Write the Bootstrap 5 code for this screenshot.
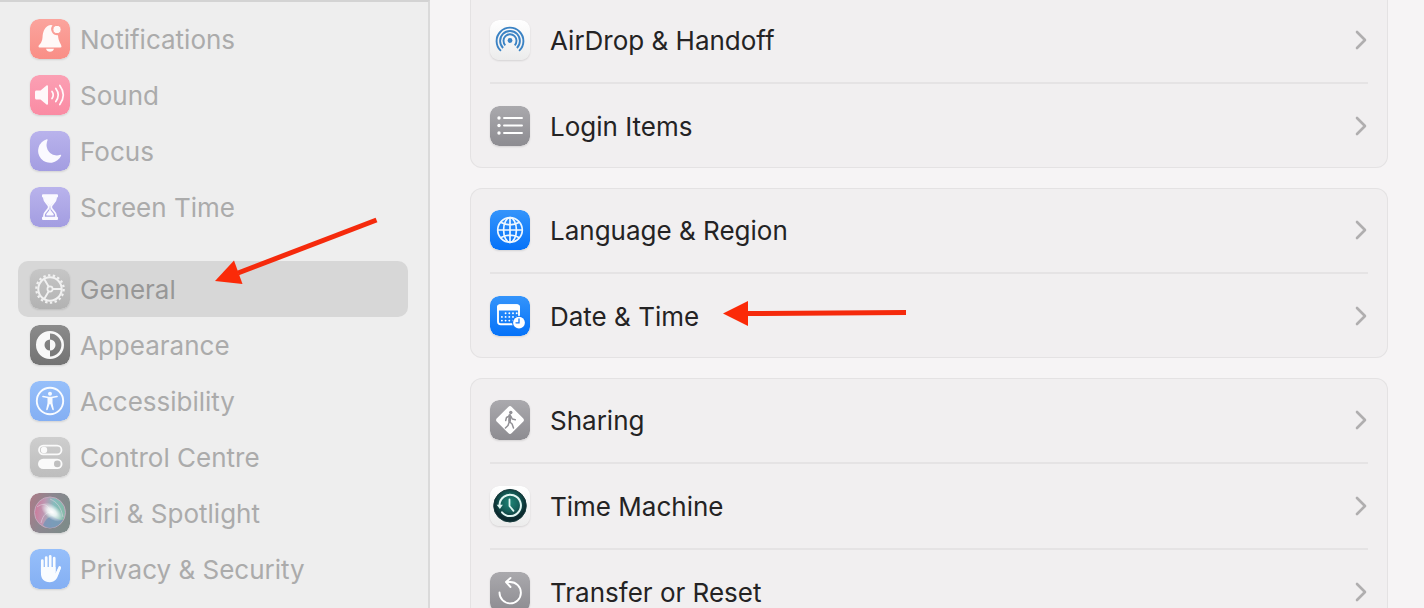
<!DOCTYPE html>
<html lang="en-GB">
<head>
<meta charset="utf-8">
<meta name="viewport" content="width=device-width, initial-scale=1">
<title>System Settings – General</title>
<link href="https://cdn.jsdelivr.net/npm/bootstrap@5.3.0/dist/css/bootstrap.min.css" rel="stylesheet">
<style>
  body { font-family: Inter, "Liberation Sans", sans-serif; font-size: 26px; line-height: 32px; background: #f6f4f5; color: #242324; }
  .side-pane { width: 430px; background: #eeeeee; border-top: 2px solid #d3d3d3; border-right: 2px solid #dadada; padding: 9px 20px 12px 18px; }
  .side-link { height: 56px; padding: 0 12px; gap: 10px; border-radius: 10px; color: #ababab; }
  .side-link:hover { color: #979797; }
  .side-link.active { background: #d7d7d7; color: #979797; }
  .side-link > span, .panel-row > span { padding-top: 2px; }
  .side-group { margin-top: 26px; }
  .tile { width: 40px; height: 40px; flex: none; border-radius: 9px; box-shadow: 0 1px 2px rgba(0,0,0,.12); }
  .main-pane { padding: 0 36px 20px 40px; }
  .panel { background: #f1eff0; border-radius: 12px; box-shadow: inset 0 0 0 1px #e4e2e3; padding: 0 20px; margin-bottom: 20px; }
  .panel-cut { margin-top: -2px; border-top-left-radius: 0; border-top-right-radius: 0; }
  .panel-row { height: 84px; gap: 20px; color: inherit; }
  .panel-row + .panel-row { height: 86px; border-top: 2px solid #e5e3e4; }
  .chev { width: 14px; height: 20px; flex: none; }
  .pointer { position: absolute; pointer-events: none; z-index: 2; }
  .pointer-general { left: 196px; top: -44px; }
  .pointer-date { left: 232px; top: 27px; }
</style>
<script src="https://cdn.jsdelivr.net/npm/bootstrap@5.3.0/dist/js/bootstrap.bundle.min.js"></script>
</head>
<body>
<div class="d-flex vh-100 overflow-hidden">
  <nav class="side-pane flex-shrink-0 overflow-hidden" aria-label="Settings">
    <div class="d-flex flex-column">
      <a href="#" class="side-link d-flex align-items-center text-decoration-none">
        <svg class="tile" viewBox="0 0 40 40" aria-hidden="true"><defs><linearGradient id="gRed" x2="0" y2="1"><stop stop-color="#fba49d"/><stop offset="1" stop-color="#f98e86"/></linearGradient></defs><rect width="40" height="40" rx="9" fill="url(#gRed)"/><path d="M8.500 27.500c0-2 3.500-2.500 4-9 .4-6.500 2.500-11.500 8-12.500l2 .3a6.200 6.200 0 0 0 5.500 10c.5 7 3.500 9 3.500 11.200 0 .6-.4.900-1 .9H9.500c-.6 0-1-.3-1-.9zM16 29.800h8c-.5 2-2 3-4 3s-3.500-1-4-3z" fill="#fff8f7"/><circle cx="27" cy="10.500" r="4.100" fill="#fff8f7" stroke="#fa9c94" stroke-width="1"/></svg>
        <span>Notifications</span></a>
      <a href="#" class="side-link d-flex align-items-center text-decoration-none">
        <svg class="tile" viewBox="0 0 40 40" aria-hidden="true"><defs><linearGradient id="gPink" x2="0" y2="1"><stop stop-color="#fba0b4"/><stop offset="1" stop-color="#fa8ba3"/></linearGradient></defs><rect width="40" height="40" rx="9" fill="url(#gPink)"/><path d="M5 17c0-.9.5-1.500 1.500-1.500h4l6-5c.8-.6 1.500-.2 1.500.8v17.400c0 1-.7 1.400-1.500.8l-6-5h-4c-1 0-1.500-.6-1.500-1.500z" fill="#fff8fa"/><g fill="none" stroke="#fff8fa" stroke-width="1.700" stroke-linecap="round"><path d="M22 16.500q2.500 3.500 0 7" /><path d="M25.800 13.500q4.800 6.500 0 13"/><path d="M29.800 10.500q7 9.500 0 19"/></g></svg>
        <span>Sound</span></a>
      <a href="#" class="side-link d-flex align-items-center text-decoration-none">
        <svg class="tile" viewBox="0 0 40 40" aria-hidden="true"><defs><linearGradient id="gPurple" x2="0" y2="1"><stop stop-color="#b9b3ec"/><stop offset="1" stop-color="#a39de1"/></linearGradient></defs><rect width="40" height="40" rx="9" fill="url(#gPurple)"/><path d="M16.800 8.300c.5-.2 1 .2.800.8A14 14 0 0 0 16.500 14a10.300 10.300 0 0 0 13.700 9.800c.7-.2 1.200.2.900.9A12 12 0 1 1 16.800 8.300z" fill="#faf9ff"/></svg>
        <span>Focus</span></a>
      <a href="#" class="side-link d-flex align-items-center text-decoration-none">
        <svg class="tile" viewBox="0 0 40 40" aria-hidden="true"><rect width="40" height="40" rx="9" fill="url(#gPurple)"/><g fill="none" stroke="#faf9ff" stroke-width="1.700"><path d="M14 9v2.500c0 4 4.800 5.500 4.800 8.500S14 24.500 14 28.500V31M26 9v2.500c0 4-4.800 5.500-4.800 8.500s4.800 4.500 4.800 8.500V31"/></g><path d="M13 7.200h14a1 1 0 0 1 1 1v1.300a1 1 0 0 1-1 1H13a1 1 0 0 1-1-1V8.200a1 1 0 0 1 1-1zM13 29.700h14a1 1 0 0 1 1 1V32a1 1 0 0 1-1 1H13a1 1 0 0 1-1-1v-1.300a1 1 0 0 1 1-1zM14.500 10h11v2.500c-1 3.500-4.900 4-5.200 8h-.6c-.3-4-4.200-4.500-5.200-8zM19.700 20h.6c0 2.500.3 3.500 1.300 4.500l2 2.500c.5 1 0 1.500-.8 1.500h-5.600c-.8 0-1.300-.5-.8-1.500l2-2.500c1-1 1.300-2 1.300-4.500z" fill="#faf9ff"/></svg>
        <span>Screen Time</span></a>
    </div>
    <div class="side-group d-flex flex-column">
      <a href="#" class="side-link active d-flex align-items-center text-decoration-none position-relative" aria-current="page">
        <svg class="tile" viewBox="0 0 40 40" aria-hidden="true"><defs><linearGradient id="gGrey" x2="0" y2="1"><stop stop-color="#c6c6c6"/><stop offset="1" stop-color="#b2b2b2"/></linearGradient></defs><rect width="40" height="40" rx="9" fill="url(#gGrey)"/><g fill="none" stroke="#f1f1f1"><circle cx="20" cy="20" r="13.700" stroke-width="2.200" stroke-dasharray="2.390 2.390"/><circle cx="20" cy="20" r="11.700" stroke-width="2"/><circle cx="20" cy="20" r="2.600" stroke-width="1.700"/><path d="M22.800 20H31M18.600 17.600 14.200 10M18.600 22.400 14.200 30" stroke-width="1.900"/></g></svg>
        <span>General</span>
        <svg class="pointer pointer-general" width="166" height="70" viewBox="0 0 166 70" aria-hidden="true"><path d="M24 56 162.500 3" stroke="#f52a0c" stroke-width="5"/><path d="M1 64 20 43.500 28.500 67z" fill="#fb2a08"/></svg>
      </a>
      <a href="#" class="side-link d-flex align-items-center text-decoration-none">
        <svg class="tile" viewBox="0 0 40 40" aria-hidden="true"><defs><linearGradient id="gDark" x2="0" y2="1"><stop stop-color="#8b8b8b"/><stop offset="1" stop-color="#737373"/></linearGradient></defs><rect width="40" height="40" rx="9" fill="url(#gDark)"/><circle cx="20" cy="20" r="12.700" fill="none" stroke="#f8f8f8" stroke-width="2.600"/><path d="M20 7a13 13 0 0 0 0 26v-7.500a5.500 5.500 0 0 1 0-11zM20 14.500a5.500 5.500 0 0 1 0 11z" fill="#f8f8f8"/></svg>
        <span>Appearance</span></a>
      <a href="#" class="side-link d-flex align-items-center text-decoration-none">
        <svg class="tile" viewBox="0 0 40 40" aria-hidden="true"><defs><linearGradient id="gSky" x2="0" y2="1"><stop stop-color="#96bffa"/><stop offset="1" stop-color="#84aff3"/></linearGradient></defs><rect width="40" height="40" rx="9" fill="url(#gSky)"/><circle cx="20" cy="20" r="13.200" fill="none" stroke="#f8fbff" stroke-width="1.900"/><circle cx="20" cy="12.800" r="2" fill="#f8fbff"/><path d="M13 15.500 18.500 16.500h3l5.500-1" stroke="#f8fbff" stroke-width="1.700" fill="none" stroke-linecap="round"/><path d="M17.500 16h5v6l1.300 6.200c.2 1-1.200 1.400-1.500.4L20.300 23h-.6l-2 5.600c-.3 1-1.700.6-1.500-.4L17.500 22z" fill="#f8fbff"/></svg>
        <span>Accessibility</span></a>
      <a href="#" class="side-link d-flex align-items-center text-decoration-none">
        <svg class="tile" viewBox="0 0 40 40" aria-hidden="true"><defs><linearGradient id="gSilver" x2="0" y2="1"><stop stop-color="#cecece"/><stop offset="1" stop-color="#bdbdbd"/></linearGradient></defs><rect width="40" height="40" rx="9" fill="url(#gSilver)"/><rect x="9" y="8.700" width="22.500" height="8.600" rx="4.300" fill="none" stroke="#fafafa" stroke-width="1.800"/><circle cx="14" cy="13" r="3.200" fill="#fafafa"/><rect x="8" y="21.700" width="24.500" height="10.400" rx="5.200" fill="#fafafa"/><circle cx="27.300" cy="26.900" r="3.300" fill="#bfbfbf"/></svg>
        <span>Control Centre</span></a>
      <a href="#" class="side-link d-flex align-items-center text-decoration-none">
        <svg class="tile" viewBox="0 0 40 40" aria-hidden="true"><defs><linearGradient id="gSiri" x2="1" y2=".4"><stop stop-color="#ad7b87"/><stop offset=".5" stop-color="#8c8790"/><stop offset="1" stop-color="#7f8b8a"/></linearGradient><linearGradient id="gOrb" x2="1" y2=".1"><stop stop-color="#cf7797"/><stop offset=".35" stop-color="#bd97b2"/><stop offset=".65" stop-color="#85bcbd"/><stop offset="1" stop-color="#85bba9"/></linearGradient><radialGradient id="gGlow"><stop stop-color="#fff"/><stop offset=".4" stop-color="#fff" stop-opacity=".8"/><stop offset="1" stop-color="#fff" stop-opacity="0"/></radialGradient></defs><rect width="40" height="40" rx="9" fill="url(#gSiri)"/><circle cx="20" cy="19.500" r="15.500" fill="url(#gOrb)" stroke="#c3a9bd" stroke-width="1"/><path d="M13 32c2-5 5-8 9-9 3 2 6 4 11 4-3 5-8 8-13 8-3 0-5-1-7-3z" fill="#7794b8" opacity=".8"/><path d="M7 14c5-4 11-4 14 6M11 30c2-9 7-12 11-10M20 6c7 3 11 8 13 18" fill="none" stroke="#dcd3df" stroke-opacity=".6"/><ellipse cx="22" cy="19" rx="13" ry="7" transform="rotate(38 22 19)" fill="url(#gGlow)"/></svg>
        <span>Siri &amp; Spotlight</span></a>
      <a href="#" class="side-link d-flex align-items-center text-decoration-none">
        <svg class="tile" viewBox="0 0 40 40" aria-hidden="true"><rect width="40" height="40" rx="9" fill="url(#gSky)"/><g stroke="#f9fcff" stroke-width="2.700" stroke-linecap="round" fill="none"><path d="M12.300 11.500V23M16.200 8.500V22M20.200 7.300V22M24.200 9.200V23"/><path d="M29.700 18.500 26.500 26"/></g><path d="M10.950 18h14.600v6.500l3-6 2.300.8-3 7.700c-1.500 4-4 6.200-8 6.200-6 0-8.900-3.700-8.900-9z" fill="#f9fcff"/></svg>
        <span>Privacy &amp; Security</span></a>
    </div>
  </nav>

  <main class="main-pane flex-grow-1 overflow-hidden">
    <section class="panel panel-cut">
      <a href="#" class="panel-row d-flex align-items-center text-decoration-none">
        <svg class="tile" viewBox="0 0 40 40" aria-hidden="true"><defs><linearGradient id="gWhite" x2="0" y2="1"><stop stop-color="#fff"/><stop offset="1" stop-color="#ececec"/></linearGradient></defs><rect width="40" height="40" rx="9" fill="url(#gWhite)"/><g fill="none" stroke="#3b83c4" stroke-width="1.900"><path d="M10.900 30.900a13.400 13.400 0 1 1 18.200 0"/><path d="M13.100 28a9.900 9.900 0 1 1 13.800 0"/><path d="M15.300 25.300a6.500 6.500 0 1 1 9.400 0"/></g><circle cx="20" cy="20.500" r="2.400" fill="#3b83c4"/></svg>
        <span class="flex-grow-1">AirDrop &amp; Handoff</span>
        <svg class="chev" viewBox="0 0 14 20" aria-hidden="true"><path d="m3 2 8 8-8 8" fill="none" stroke="#b0aeaf" stroke-width="2.600" stroke-linecap="round" stroke-linejoin="round"/></svg></a>
      <a href="#" class="panel-row d-flex align-items-center text-decoration-none">
        <svg class="tile" viewBox="0 0 40 40" aria-hidden="true"><defs><linearGradient id="gSteel" x2="0" y2="1"><stop stop-color="#aaa9ad"/><stop offset="1" stop-color="#8d8c91"/></linearGradient></defs><rect width="40" height="40" rx="9" fill="url(#gSteel)"/><path d="M14 12h18M14 19.500h18M14 27h18" stroke="#fff" stroke-width="1.900" stroke-linecap="round"/><g fill="#fff"><circle cx="9" cy="12" r="1.700"/><circle cx="9" cy="19.500" r="1.700"/><circle cx="9" cy="27" r="1.700"/></g></svg>
        <span class="flex-grow-1">Login Items</span>
        <svg class="chev" viewBox="0 0 14 20" aria-hidden="true"><path d="m3 2 8 8-8 8" fill="none" stroke="#b0aeaf" stroke-width="2.600" stroke-linecap="round" stroke-linejoin="round"/></svg></a>
    </section>

    <section class="panel">
      <a href="#" class="panel-row d-flex align-items-center text-decoration-none">
        <svg class="tile" viewBox="0 0 40 40" aria-hidden="true"><defs><linearGradient id="gBlue" x2="0" y2="1"><stop stop-color="#3494fb"/><stop offset="1" stop-color="#0572f8"/></linearGradient></defs><rect width="40" height="40" rx="9" fill="url(#gBlue)"/><g fill="none" stroke="#eef7ff" stroke-width="1.700"><circle cx="20" cy="20" r="12.300"/><ellipse cx="20" cy="20" rx="6.400" ry="12.300"/><path d="M20 7.700v24.600M7.700 20h24.600M10.500 12.300q9.500 5 19 0M10.500 27.700q9.500-5 19 0"/></g></svg>
        <span class="flex-grow-1">Language &amp; Region</span>
        <svg class="chev" viewBox="0 0 14 20" aria-hidden="true"><path d="m3 2 8 8-8 8" fill="none" stroke="#b0aeaf" stroke-width="2.600" stroke-linecap="round" stroke-linejoin="round"/></svg></a>
      <a href="#" class="panel-row d-flex align-items-center text-decoration-none position-relative">
        <svg class="tile" viewBox="0 0 40 40" aria-hidden="true"><rect width="40" height="40" rx="9" fill="url(#gBlue)"/><rect x="8" y="9.300" width="21" height="19" rx="2.800" fill="none" stroke="#fff" stroke-width="1.900"/><path d="M7 14.500V11.500a3.200 3.200 0 0 1 3.200-3.200h16.600a3.200 3.200 0 0 1 3.200 3.200v3z" fill="#fff"/><g stroke="#fff" stroke-width="1.900" stroke-linecap="round" stroke-dasharray="0 3.700"><path d="M15.600 17.200h11.200M11.900 20.900h14.900M11.900 24.600h11.200"/></g><circle cx="29" cy="26.700" r="7" fill="#137af9"/><circle cx="29" cy="26.700" r="5.900" fill="#fff"/><path d="M29 22.900v3.900h-3" fill="none" stroke="#1479f9" stroke-width="1.300" stroke-linecap="round"/></svg>
        <span class="flex-grow-1">Date &amp; Time</span>
        <svg class="chev" viewBox="0 0 14 20" aria-hidden="true"><path d="m3 2 8 8-8 8" fill="none" stroke="#b0aeaf" stroke-width="2.600" stroke-linecap="round" stroke-linejoin="round"/></svg>
        <svg class="pointer pointer-date" width="186" height="26" viewBox="0 0 186 26" aria-hidden="true"><path d="M24 12.500 184 11.500" stroke="#f52a0c" stroke-width="5"/><path d="M1 12.500 26 0v25z" fill="#fb2a08"/></svg></a>
    </section>

    <section class="panel">
      <a href="#" class="panel-row d-flex align-items-center text-decoration-none">
        <svg class="tile" viewBox="0 0 40 40" aria-hidden="true"><rect width="40" height="40" rx="9" fill="url(#gSteel)"/><rect x="9.500" y="9.500" width="21" height="21" rx="2.500" transform="rotate(45 20 20)" fill="#fff"/><circle cx="20.800" cy="12.500" r="1.700" fill="#929196"/><path d="M20 15.500 19.300 21.500l2.800 2.500 1.400 4M19 22.500l-1 3-2.600 2.500M19.500 15.800l-3 1.700-.8 3M21 16.500l1.300 2.500 3 .8" fill="none" stroke="#929196" stroke-width="1.500" stroke-linecap="round" stroke-linejoin="round"/><path d="M19.800 15.500 19.600 21" stroke="#929196" stroke-width="2.800" stroke-linecap="round"/></svg>
        <span class="flex-grow-1">Sharing</span>
        <svg class="chev" viewBox="0 0 14 20" aria-hidden="true"><path d="m3 2 8 8-8 8" fill="none" stroke="#b0aeaf" stroke-width="2.600" stroke-linecap="round" stroke-linejoin="round"/></svg></a>
      <a href="#" class="panel-row d-flex align-items-center text-decoration-none">
        <svg class="tile" viewBox="0 0 40 40" aria-hidden="true"><defs><radialGradient id="gTeal" cy=".4"><stop stop-color="#1f8577"/><stop offset=".55" stop-color="#15605a"/><stop offset="1" stop-color="#0b2a2e"/></radialGradient></defs><rect width="40" height="40" rx="9" fill="url(#gWhite)"/><circle cx="20" cy="19.700" r="16.300" fill="url(#gTeal)" stroke="#173b3c"/><g fill="none" stroke="#e0f6f2" stroke-linecap="round"><path d="M9.500 19a10.700 10.700 0 1 1 2.500 7.300" stroke-width="2"/><path d="M19.500 13.500V20l4 4.800" stroke-width="1.800"/></g><path d="M6.700 18.700h6.200l-3 4.200z" fill="#e0f6f2"/></svg>
        <span class="flex-grow-1">Time Machine</span>
        <svg class="chev" viewBox="0 0 14 20" aria-hidden="true"><path d="m3 2 8 8-8 8" fill="none" stroke="#b0aeaf" stroke-width="2.600" stroke-linecap="round" stroke-linejoin="round"/></svg></a>
      <a href="#" class="panel-row d-flex align-items-center text-decoration-none">
        <svg class="tile" viewBox="0 0 40 40" aria-hidden="true"><rect width="40" height="40" rx="9" fill="url(#gSteel)"/><path d="M9.500 20.500A10.700 10.700 0 1 0 20.200 10H16.500M20.500 6l-4.500 4 4.500 5" fill="none" stroke="#fff" stroke-width="1.900" stroke-linecap="round" stroke-linejoin="round"/></svg>
        <span class="flex-grow-1">Transfer or Reset</span>
        <svg class="chev" viewBox="0 0 14 20" aria-hidden="true"><path d="m3 2 8 8-8 8" fill="none" stroke="#b0aeaf" stroke-width="2.600" stroke-linecap="round" stroke-linejoin="round"/></svg></a>
    </section>
  </main>
</div>
</body>
</html>
